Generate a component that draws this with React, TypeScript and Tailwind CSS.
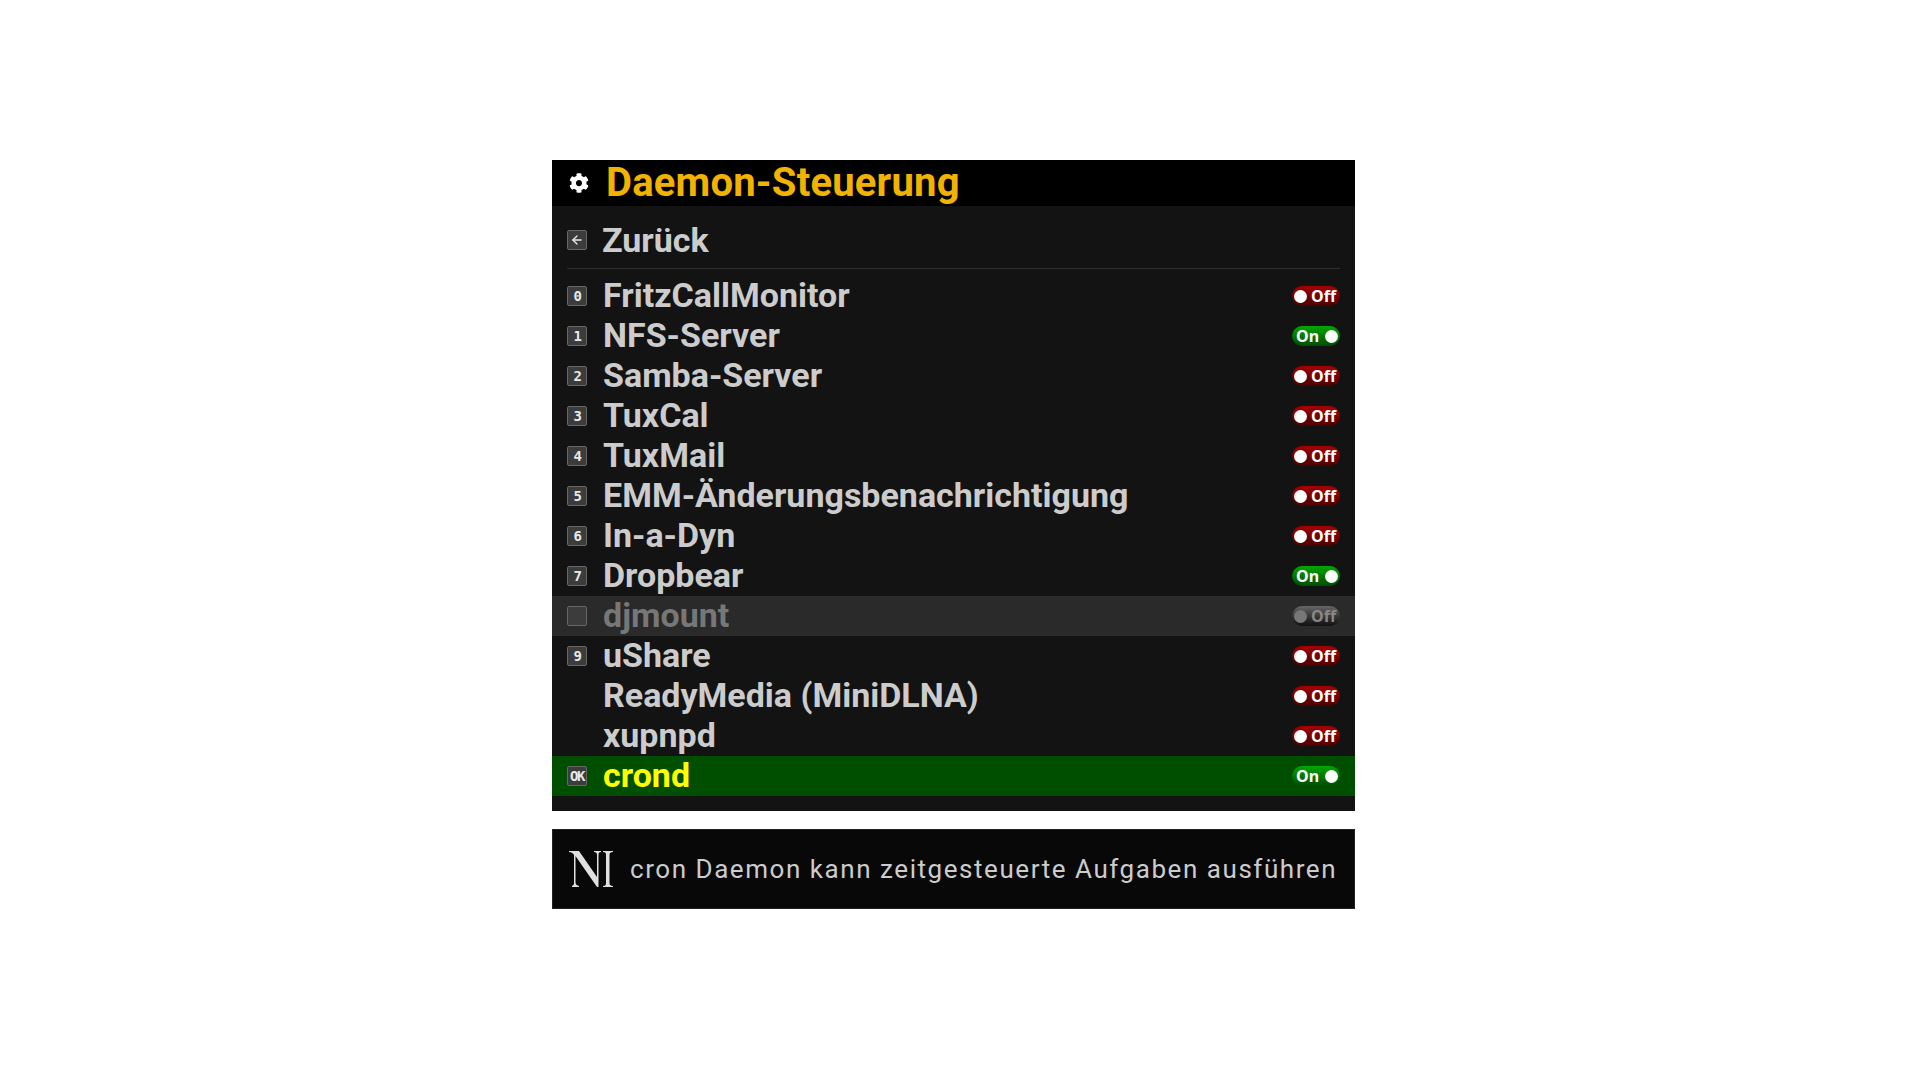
import { FaCog } from "react-icons/fa";
import { ArrowLeft } from "lucide-react";

const daemons = [
  { key: "0", name: "FritzCallMonitor", on: false },
  { key: "1", name: "NFS-Server", on: true },
  { key: "2", name: "Samba-Server", on: false },
  { key: "3", name: "TuxCal", on: false },
  { key: "4", name: "TuxMail", on: false },
  { key: "5", name: "EMM-Änderungsbenachrichtigung", on: false },
  { key: "6", name: "In-a-Dyn", on: false },
  { key: "7", name: "Dropbear", on: true },
  { key: "", name: "djmount", on: false, disabled: true },
  { key: "9", name: "uShare", on: false },
  { name: "ReadyMedia (MiniDLNA)", on: false },
  { name: "xupnpd", on: false },
  { key: "OK", name: "crond", on: true, selected: true },
];

function KeyBadge({ children }: { children?: React.ReactNode }) {
  return (
    <div className="w-5 h-5 shrink-0 flex items-center justify-center rounded-[2px] border border-[#666] bg-[#3c3c3c] text-[#e8e8e8] font-['DejaVu_Sans_Mono',monospace] font-bold text-[14px] leading-none tracking-[-1.5px]">
      {children}
    </div>
  );
}

function Toggle({ on, disabled }: { on: boolean; disabled?: boolean }) {
  if (disabled) {
    return (
      <div className="w-12 h-5 shrink-0 rounded-full bg-gradient-to-b from-[#666] to-[#111] flex items-center justify-between pl-[2px] pr-[4px] font-['Noto_Sans',sans-serif] font-bold text-[16px] leading-none text-[#888]">
        <span className="w-[13px] h-[13px] rounded-full bg-[#777]" />
        <span>Off</span>
      </div>
    );
  }
  if (on) {
    return (
      <div className="w-12 h-5 shrink-0 rounded-full bg-gradient-to-b from-[#00a800] to-[#004c00] flex items-center justify-between pl-[4px] pr-[2px] font-['Noto_Sans',sans-serif] font-bold text-[16px] leading-none text-white">
        <span>On</span>
        <span className="w-[13px] h-[13px] rounded-full bg-white" />
      </div>
    );
  }
  return (
    <div className="w-12 h-5 shrink-0 rounded-full bg-gradient-to-b from-[#a80000] to-[#4c0000] flex items-center justify-between pl-[2px] pr-[4px] font-['Noto_Sans',sans-serif] font-bold text-[16px] leading-none text-white">
      <span className="w-[13px] h-[13px] rounded-full bg-white" />
      <span>Off</span>
    </div>
  );
}

// Neutrino logo
function Logo() {
  return (
    <svg width="44" height="36" viewBox="0 0 44 36" className="shrink-0">
      <path
        fill="#e0e0e0"
        d="M0 0H10L28 26V4C28 2 27 1 25 1V0H32V1C30 1 29.5 2 29.5 4V36H28L6.5 5V31C6.5 33 7 34 10 35V36H3V35C5 34 5 33 5 31V4C4 2 2 1 0 1Z"
      />
      <path
        fill="#e0e0e0"
        d="M34 0H44V1C41.5 1 40.5 2 40.5 4V32C40.5 34 41.5 35 44 35V36H34V35C36.5 35 37 34 37 32V4C37 2 36.5 1 34 1Z"
      />
    </svg>
  );
}

export default function App() {
  return (
    <div className="min-h-screen bg-white pt-40 pl-[552px] font-['Roboto',sans-serif]">
      <div className="w-[803px]">
        <div className="h-[46px] bg-black flex items-center pl-[17px]">
          <FaCog className="text-white text-[20px] shrink-0" />
          <h1 className="ml-[17px] text-[40px] leading-none font-bold tracking-[0.2px] text-[#f2b200]">Daemon-Steuerung</h1>
        </div>

        <div className="bg-[#131313] pt-3.5 pb-[15px]">
          <div className="h-10 px-[15px] flex items-center">
            <KeyBadge>
              <ArrowLeft size={14} strokeWidth={2.25} />
            </KeyBadge>
            <span className="ml-[15px] -mt-px text-[34px] font-bold leading-none text-[#cccccc]">Zurück</span>
          </div>
          <div className="mx-[15px] mt-2 mb-[7px] h-px bg-[#2e2e2e]" />

          {daemons.map((d) => (
            <div
              key={d.name}
              className={`h-10 px-[15px] flex items-center ${d.selected ? "bg-[#004e00]" : d.disabled ? "bg-[#2a2a2a]" : ""}`}
            >
              {d.key !== undefined ? <KeyBadge>{d.key}</KeyBadge> : <div className="w-5 h-5 shrink-0" />}
              <span
                className={`ml-4 -mt-0.5 flex-1 text-[34px] font-bold leading-none ${d.selected ? "text-[#ffff00]" : d.disabled ? "text-[#777777]" : "text-[#cccccc]"}`}
              >
                {d.name}
              </span>
              <Toggle on={d.on} disabled={d.disabled} />
            </div>
          ))}
        </div>

        <div className="mt-[18px] h-20 bg-[#080808] border border-[#222] flex items-center pl-[16px]">
          <Logo />
          <span className="ml-[17px] text-[26px] leading-none text-[#cccccc] tracking-[1.55px]">
            cron Daemon kann zeitgesteuerte Aufgaben ausführen
          </span>
        </div>
      </div>
    </div>
  );
}
